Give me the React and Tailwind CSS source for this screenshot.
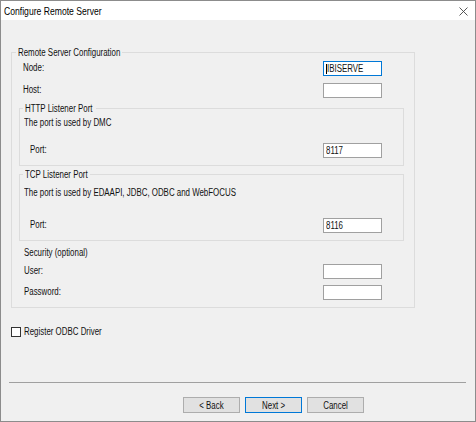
import React from "react";

const ui = "font-['Liberation_Sans',Arial,sans-serif] text-[10px] leading-[11px] text-[#111]";

// Dialog text is drawn condensed, like the classic dialog font
function T({ children, className = "", center }) {
  return (
    <span
      className={
        ui +
        " block w-max whitespace-nowrap scale-x-[0.79] " +
        (center ? "origin-center " : "origin-left ") +
        className
      }
    >
      {children}
    </span>
  );
}

function TextBox({ value, focused }) {
  return (
    <div
      className={
        "ml-auto flex h-[15px] w-[59px] items-center bg-white pl-[2px] " +
        (focused ? "border border-[#0078d7]" : "border border-[#a0a0a0]")
      }
    >
      {focused && <span className="h-[10px] w-px bg-black" />}
      <T>{value}</T>
    </div>
  );
}

function Row({ label, labelMl, inputMr, value, focused }) {
  return (
    <div className="flex h-[15px] items-center" style={{ marginRight: inputMr }}>
      <div className="-mt-[2px]" style={{ marginLeft: labelMl }}>
        <T>{label}</T>
      </div>
      <TextBox value={value} focused={focused} />
    </div>
  );
}

function Group({ title, legendMl, legendW, className, children }) {
  return (
    <fieldset className={"border border-[#dcdcdc] " + className}>
      <legend className="h-[11px] px-[2px] text-[10px] leading-[11px]" style={{ marginLeft: legendMl, width: legendW }}>
        <T>{title}</T>
      </legend>
      {children}
    </fieldset>
  );
}

function Button({ children, primary }) {
  return (
    <div
      className={
        "flex h-[16px] w-[57px] items-center justify-center bg-[#e1e1e1] " +
        (primary ? "border border-[#0078d7]" : "border border-[#adadad]")
      }
    >
      <T center>{children}</T>
    </div>
  );
}

export default function App() {
  return (
    <div className="flex h-[422px] w-[476px] flex-col border border-[#8c8c8c] bg-[#f0f0f0]">
      {/* title bar */}
      <div className="flex h-[19px] items-center justify-between bg-white pl-[3px] pr-[7px]">
        <span className="block w-max origin-left scale-x-[0.82] whitespace-nowrap font-['Liberation_Sans',Arial,sans-serif] text-[10.5px] leading-[12px] text-black">
          Configure Remote Server
        </span>
        <svg width="9" height="9" viewBox="0 0 9 9" className="mt-[1px]">
          <path d="M0.5 0.5 L8.5 8.5 M8.5 0.5 L0.5 8.5" stroke="#444" strokeWidth="0.9" fill="none" />
        </svg>
      </div>

      <div className="flex flex-col pl-[10px]">
        <Group
          title="Remote Server Configuration"
          legendMl="4px"
          legendW="106px"
          className="mt-[27px] w-[404px] pb-[7px]"
        >
          <div className="mt-[3px] flex flex-col">
            <Row label="Node:" labelMl="11px" inputMr="32px" value="IBISERVE" focused />
            <div className="mt-[7px]">
              <Row label="Host:" labelMl="11px" inputMr="32px" value="" />
            </div>

            <Group
              title="HTTP Listener Port"
              legendMl="3px"
              legendW="73px"
              className="ml-[7px] mt-[5px] w-[385px] pb-[7px]"
            >
              <div className="ml-[4px] mt-[3px]">
                <T>The port is used by DMC</T>
              </div>
              <div className="mt-[15px]">
                <Row label="Port:" labelMl="10px" inputMr="21px" value="8117" />
              </div>
            </Group>

            <Group
              title="TCP Listener Port"
              legendMl="3px"
              legendW="67px"
              className="ml-[7px] mt-[3px] w-[385px] pb-[7px]"
            >
              <div className="ml-[4px] mt-[7px]">
                <T>The port is used by EDAAPI, JDBC, ODBC and WebFOCUS</T>
              </div>
              <div className="mt-[20px]">
                <Row label="Port:" labelMl="10px" inputMr="21px" value="8116" />
              </div>
            </Group>

            <div className="ml-[12px] mt-[6px]">
              <T>Security (optional)</T>
            </div>
            <div className="mt-[6px]">
              <Row label="User:" labelMl="12px" inputMr="32px" value="" />
            </div>
            <div className="mt-[6px]">
              <Row label="Password:" labelMl="12px" inputMr="32px" value="" />
            </div>
          </div>
        </Group>

        <label className="mt-[18px] flex h-[11px] items-center gap-[3px]">
          <span className="h-[10px] w-[10px] border border-[#333] bg-white" />
          <T>Register ODBC Driver</T>
        </label>
      </div>

      <div className="ml-[8px] mt-[45px] h-px w-[457px] bg-[#a0a0a0]" />

      <div className="ml-[182px] mt-[14px] flex gap-[5px]">
        <Button>&lt; Back</Button>
        <Button primary>Next &gt;</Button>
        <Button>Cancel</Button>
      </div>
    </div>
  );
}
